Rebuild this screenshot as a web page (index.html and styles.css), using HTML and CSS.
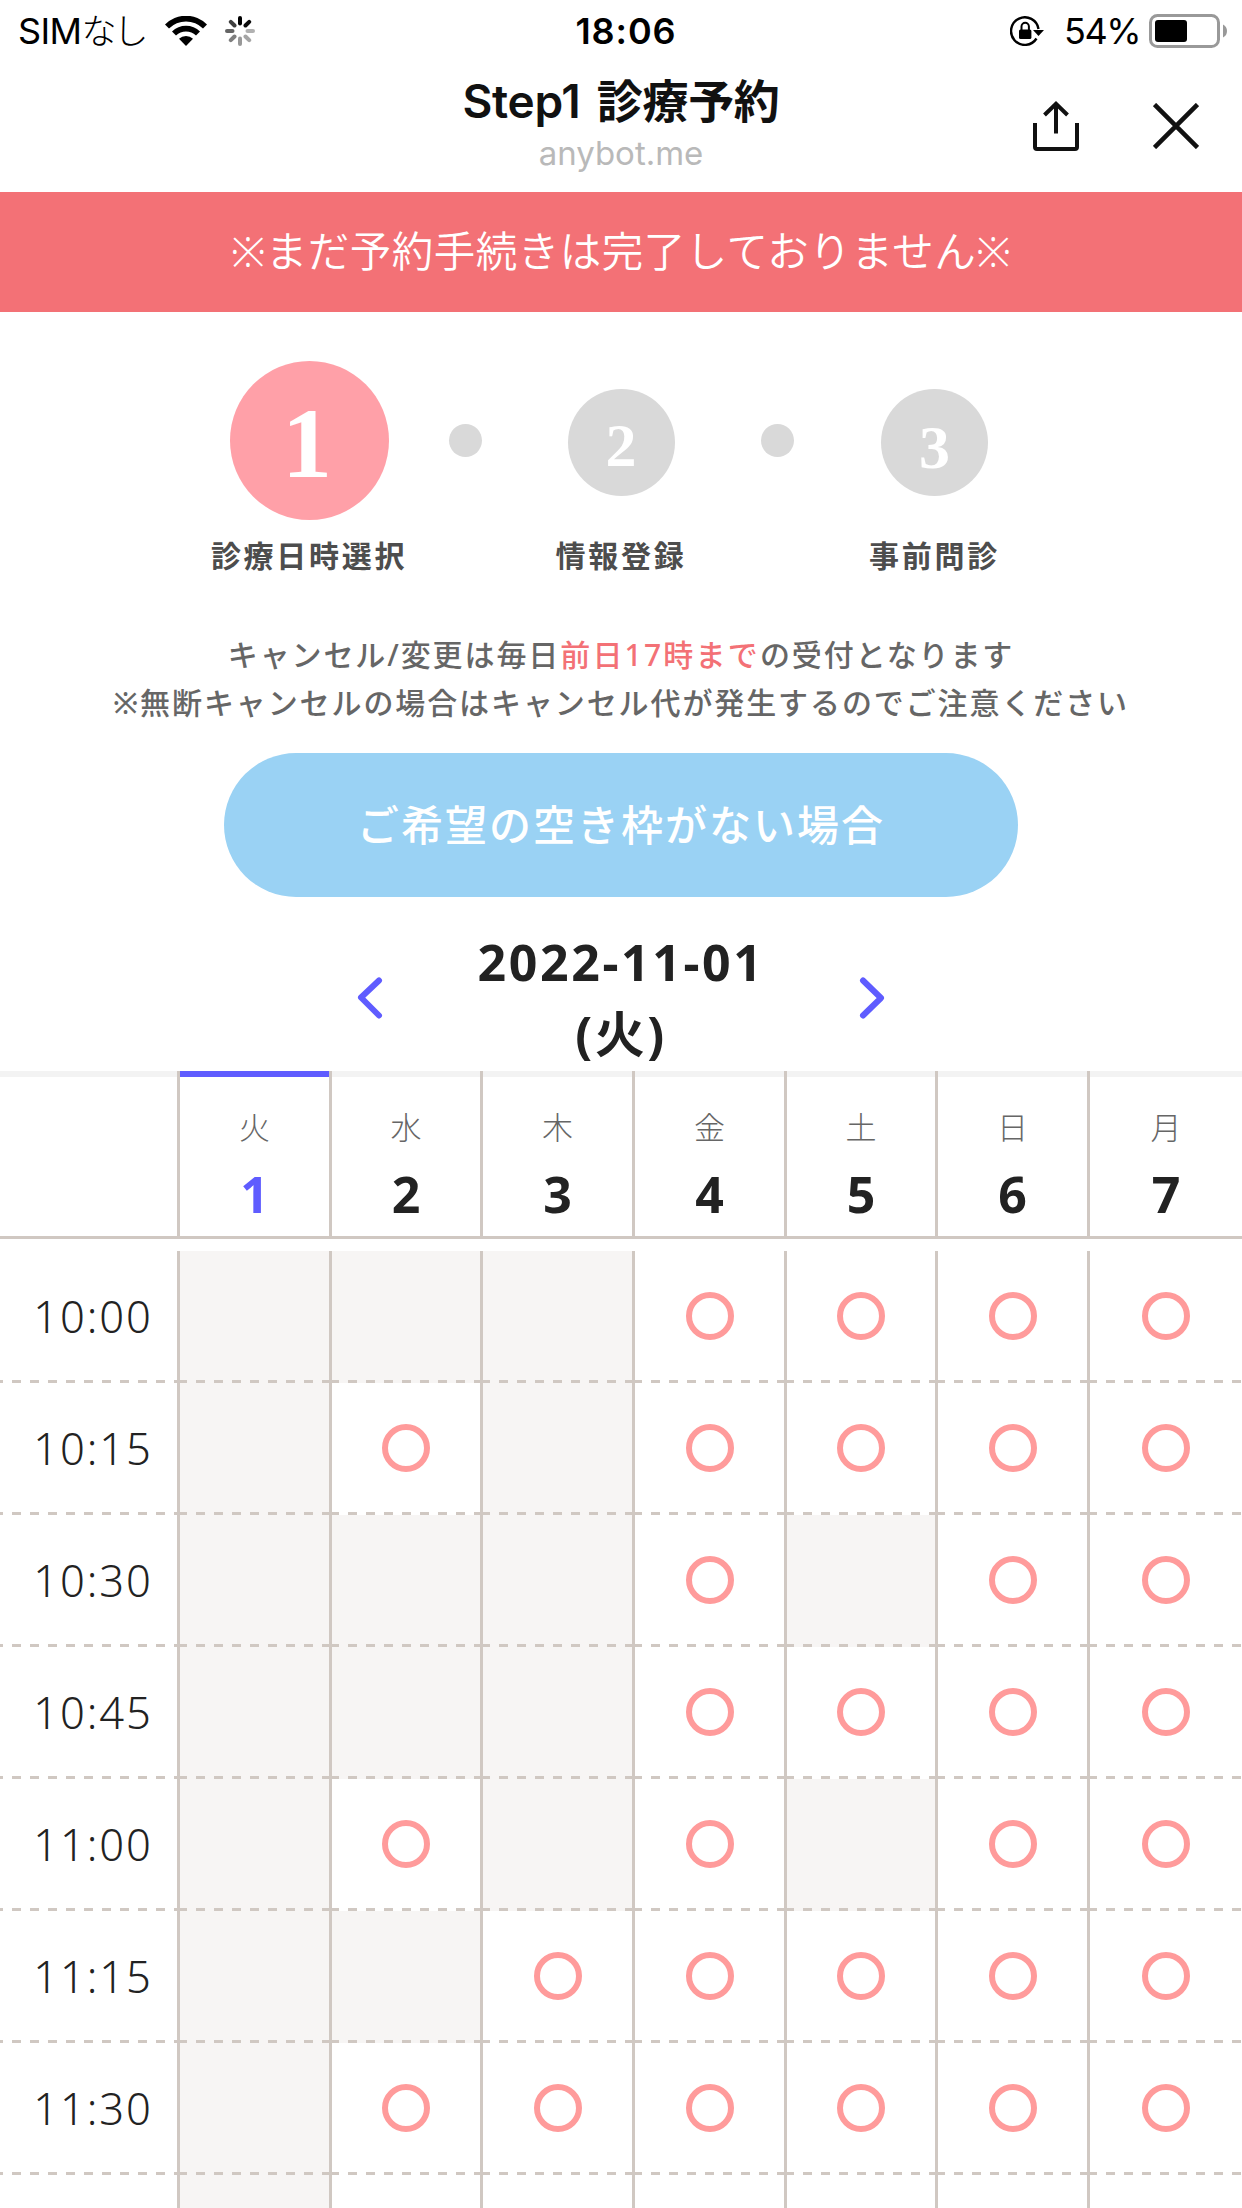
FILE: index.html
```html
<!DOCTYPE html>
<html lang="ja">
<head>
    <meta charset="UTF-8">
    <meta name="viewport" content="width=device-width, initial-scale=1.0">
    <title>Step1 診療予約</title>
    <link rel="stylesheet" href="styles.css">
</head>
<body>
    <div class="status-bar">
        <div class="status-left">
            <span class="carrier">SIM<span class="carrier-kana">なし</span></span>
            <svg class="wifi" width="42" height="30" viewBox="0 0 42 30">
                <path d="M0 8.500A29.500 29.500 0 0 1 42 8.500L38 12.500A24 24 0 0 0 4 12.500Z"/>
                <path d="M7 15.500A20 20 0 0 1 35 15.500L31 19.500A14.500 14.500 0 0 0 11 19.500Z"/>
                <path d="M14 22.800A10 10 0 0 1 28 22.800L21 30Z"/>
            </svg>
            <svg class="spinner" width="30" height="30" viewBox="0 0 30 30" stroke="#000" stroke-width="4" stroke-linecap="round">
                <path d="M15 2V7.500"/>
                <path d="M24.200 5.800L20.500 9.500" opacity=".95"/>
                <path d="M28 15H22.500" opacity=".3"/>
                <path d="M24.200 24.200L20.500 20.500" opacity=".35"/>
                <path d="M15 28V22.500" opacity=".4"/>
                <path d="M5.800 24.200L9.500 20.500" opacity=".5"/>
                <path d="M2 15H7.500" opacity=".6"/>
                <path d="M5.800 5.800L9.500 9.500" opacity=".75"/>
            </svg>
        </div>
        <div class="clock">18:06</div>
        <div class="status-right">
            <svg class="lock" width="34" height="30" viewBox="0 0 34 30">
                <path d="M26.500 22.500A13.800 13.800 0 1 1 28.500 13" fill="none" stroke="#000" stroke-width="2.400"/>
                <path d="M23 14H34L28.500 20Z"/>
                <path d="M11.500 14V10.500A3.700 3.700 0 0 1 18.900 10.500V14" fill="none" stroke="#000" stroke-width="2"/>
                <rect x="9" y="13.500" width="12.400" height="9.500" rx="1.500"/>
            </svg>
            <span class="percent">54%</span>
            <svg class="battery" width="78" height="34" viewBox="0 0 78 34">
                <rect x="1.500" y="1.500" width="68" height="31" rx="7" fill="none" stroke="#999" stroke-width="3"/>
                <rect x="6" y="6" width="32" height="22" rx="3"/>
                <path d="M74 10.500Q78 12.500 78 17T74 23.500Z" fill="#999"/>
            </svg>
        </div>
    </div>

    <div class="nav-bar">
        <div class="nav-title">
            <div class="title">Step1 診療予約</div>
            <div class="domain">anybot.me</div>
        </div>
        <div class="nav-actions">
            <svg width="46" height="50" viewBox="0 0 46 50" fill="none" stroke="#111" stroke-width="4">
                <path d="M2 22V46Q2 48 4 48H42Q44 48 44 46V22M23 32.500V3M11.500 14L23 2.800L34.500 14"/>
            </svg>
            <svg width="46" height="46" viewBox="0 0 46 46" fill="none" stroke="#111" stroke-width="4.600">
                <path d="M1.500 1.500L44.500 44.500M44.500 1.500L1.500 44.500"/>
            </svg>
        </div>
    </div>

    <div class="banner">※まだ予約手続きは完了しておりません※</div>

    <div class="steps">
        <div class="step active">
            <div class="step-circle">1</div>
            <div class="step-label">診療日時選択</div>
        </div>
        <div class="step-dot"></div>
        <div class="step">
            <div class="step-circle">2</div>
            <div class="step-label">情報登録</div>
        </div>
        <div class="step-dot"></div>
        <div class="step">
            <div class="step-circle old-style">3</div>
            <div class="step-label">事前問診</div>
        </div>
    </div>

    <div class="notice">
        キャンセル/変更は毎日<span class="deadline">前日17時まで</span>の受付となります<br>
        ※無断キャンセルの場合はキャンセル代が発生するのでご注意ください
    </div>

    <button class="no-slot">ご希望の空き枠がない場合</button>

    <div class="date-nav">
        <svg width="26" height="42" viewBox="0 0 26 42">
            <path d="M22 3.500L4 20.500L22 38.500"/>
        </svg>
        <div class="date">2022-11-01<br>(火)</div>
        <svg width="26" height="42" viewBox="0 0 26 42">
            <path d="M4 3.500L22 21L4 38.500"/>
        </svg>
    </div>

    <div class="row days">
        <div class="day-blank"></div>
        <div class="day today"><span>火</span><b>1</b></div>
        <div class="day"><span>水</span><b>2</b></div>
        <div class="day"><span>木</span><b>3</b></div>
        <div class="day"><span>金</span><b>4</b></div>
        <div class="day"><span>土</span><b>5</b></div>
        <div class="day"><span>日</span><b>6</b></div>
        <div class="day"><span>月</span><b>7</b></div>
    </div>
    <div class="slots" id="slots"></div>

    <script>
        const slots = [
            ['10:00', 'xxxoooo'],
            ['10:15', 'xoxoooo'],
            ['10:30', 'xxxoxoo'],
            ['10:45', 'xxxoooo'],
            ['11:00', 'xoxoxoo'],
            ['11:15', 'xxooooo'],
            ['11:30', 'xoooooo'],
            ['', 'x------']
        ];

        const cellHtml = {
            o: '<div class="cell"><i class="circle"></i></div>',
            x: '<div class="cell closed"></div>',
            '-': '<div class="cell"></div>'
        };

        document.getElementById('slots').innerHTML = slots.map(([time, days]) => {
            const cells = [...days].map(d => cellHtml[d]).join('');
            return `<div class="row"><div class="time">${time}</div>${cells}</div>`;
        }).join('');
    </script>
</body>
</html>
```
FILE: styles.css
```css
:root {
    --accent: #5f5cff;
    --line: #d0c8c2;
    --coral: #f37176;
    --font: 'Noto Sans', 'Noto Sans CJK JP', sans-serif;
    --font-ui: 'Inter', 'Noto Sans CJK JP', sans-serif;
}

* {
    box-sizing: border-box;
}

body {
    margin: 0;
    width: 1242px;
    height: 2208px;
    overflow: hidden;
    background: #fff;
    color: #222;
    font-family: var(--font);
}

svg {
    display: block;
    flex: none;
}

/* status bar */
.status-bar {
    display: grid;
    grid-template-columns: 1fr auto 1fr;
    align-items: center;
    height: 60px;
    padding: 0 15px 0 18px;
    color: #000;
    font-family: var(--font-ui);
    font-size: 36px;
    line-height: 62px;
}

.status-left, .status-right {
    display: flex;
    align-items: center;
}

.status-right {
    justify-content: flex-end;
}

.carrier {
    width: 147px;
    font-weight: 400;
    letter-spacing: -0.6px;
    white-space: nowrap;
}

.carrier-kana {
    font-size: 35px;
    font-weight: 300;
    letter-spacing: -3px;
}

.spinner {
    margin-left: 18px;
}

.clock {
    padding-left: 7px;
    font-weight: 600;
    letter-spacing: 0.9px;
}

.lock {
    margin-right: 20px;
}

.percent {
    width: 85px;
    letter-spacing: -1.5px;
}

/* nav bar */
.nav-bar {
    display: grid;
    grid-template-columns: 1fr auto 1fr;
    height: 132px;
    padding-right: 43px;
    padding-left: 43px;
    font-family: var(--font-ui);
}

.nav-title {
    grid-column: 2;
    text-align: center;
}

.title {
    padding-top: 12px;
    font-size: 46px;
    font-weight: 600;
    line-height: 58px;
    color: #111;
    letter-spacing: -0.8px;
    word-spacing: 5px;
}

.title::first-line {
    letter-spacing: -0.3px;
}

.domain {
    padding-top: 2px;
    font-size: 33px;
    line-height: 42px;
    color: #b9b9b9;
}

.nav-actions {
    display: flex;
    justify-content: flex-end;
    align-items: center;
    gap: 74px;
    height: 132px;
}

.banner {
    height: 120px;
    background: var(--coral);
    color: #fff;
    font-size: 41.5px;
    font-weight: 350;
    line-height: 118px;
    letter-spacing: 0.5px;
    text-align: center;
}

/* steps */
.steps {
    display: grid;
    grid-template-columns: repeat(5, 156px);
    justify-content: center;
    height: 319px;
    padding-top: 49px;
}

.step {
    display: flex;
    flex-direction: column;
    align-items: center;
    padding-top: 28px;
}

.step:last-child {
    padding-left: 3px;
}

.step-circle {
    width: 107px;
    height: 107px;
    border-radius: 50%;
    background: #d9d9d9;
    color: #fff;
    font-family: 'Liberation Serif', serif;
    font-size: 62px;
    font-weight: bold;
    line-height: 112px;
    text-align: center;
}

.step-circle.old-style {
    line-height: 116px;
}

.step.active {
    padding-top: 0;
}

.step.active .step-circle {
    width: 159px;
    height: 159px;
    padding-right: 4px;
    background: #ffa0a8;
    font-size: 100px;
    line-height: 166px;
}

.step-label {
    margin-top: 38px;
    font-size: 30px;
    font-weight: 600;
    line-height: 44px;
    letter-spacing: 2.7px;
    white-space: nowrap;
    color: #4d4d4d;
}

.step.active .step-label {
    margin-top: 14px;
}

.step-dot {
    width: 33px;
    height: 33px;
    margin: 63px auto 0;
    border-radius: 50%;
    background: #d9d9d9;
}

.notice {
    height: 122px;
    color: #666;
    font-size: 30px;
    font-weight: 500;
    line-height: 48px;
    letter-spacing: 1.9px;
    text-align: center;
}

.deadline {
    color: var(--coral);
    letter-spacing: 2.2px;
}

.no-slot {
    display: block;
    width: 794px;
    height: 144px;
    margin: 0 auto;
    padding: 0 0 6px;
    border: none;
    border-radius: 72px;
    background: #9ad2f4;
    color: #fff;
    font-family: var(--font);
    font-size: 42px;
    font-weight: 500;
    letter-spacing: 2px;
}

/* date switcher */
.date-nav {
    display: flex;
    justify-content: center;
    align-items: center;
    height: 174px;
    padding-top: 27px;
}

.date-nav path {
    fill: none;
    stroke: var(--accent);
    stroke-width: 6;
    stroke-linecap: round;
    stroke-linejoin: round;
}

.date {
    width: 476px;
    font-size: 50px;
    font-weight: bold;
    line-height: 72px;
    letter-spacing: 2.6px;
    text-align: center;
}

/* calendar */
.row {
    display: grid;
    grid-template-columns: 177px 152px 151px 152px 152px 151px 152px 155px;
    height: 132px;
}

.days {
    height: 168px;
    border-bottom: 3px solid var(--line);
}

.day, .day-blank {
    background: linear-gradient(#f3f3f3, #f3f3f3) no-repeat 0 0 / 100% 6px;
}

.day {
    display: flex;
    flex-direction: column;
    align-items: center;
    padding-top: 35px;
    border-left: 3px solid var(--line);
}

.day span {
    font-size: 31px;
    font-weight: 300;
    line-height: 42px;
    color: #666;
}

.day b {
    margin-top: 13px;
    font-size: 50px;
    line-height: 66px;
}

.day.today {
    background-image: linear-gradient(var(--accent), var(--accent));
}

.today b {
    color: var(--accent);
}

.slots {
    padding-top: 12px;
}

.time, .cell {
    display: flex;
    justify-content: center;
    align-items: center;
    padding-bottom: 3px;
    background-image: repeating-linear-gradient(90deg, var(--line) 0 7px, transparent 7px 16px, var(--line) 16px 18px);
    background-repeat: no-repeat;
    background-position: 0 100%;
    background-size: 100% 3px;
}

.time {
    background-image: repeating-linear-gradient(90deg, var(--line) 0 3px, transparent 3px 12px, var(--line) 12px 18px);
    padding-left: 9px;
    font-size: 43.5px;
    font-weight: 350;
    letter-spacing: 1.9px;
}

.cell {
    border-left: 3px solid var(--line);
}

.closed {
    background-color: #f7f5f4;
}

.circle {
    width: 48px;
    height: 48px;
    border: 6px solid #ff9b9b;
    border-radius: 50%;
}
```
